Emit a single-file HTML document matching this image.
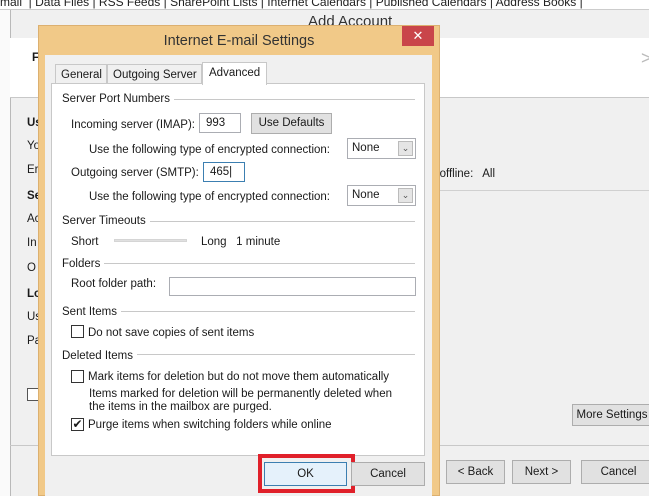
<!DOCTYPE html>
<html><head><style>
*{margin:0;padding:0;box-sizing:border-box}
body{width:649px;height:496px;overflow:hidden;background:#f0f0f0;font-family:"Liberation Sans",sans-serif;font-size:11.5px;color:#1a1a1a;position:relative}
.a{position:absolute;white-space:nowrap}
.btn{position:absolute;border:1px solid #adadad;background:#e1e1e1;text-align:center}
.box{position:absolute;border:1px solid #abadb3;background:#fff}
.cb{position:absolute;width:13px;height:13px;border:1px solid #333;background:#fff}
.grp{position:absolute;height:1px;background:#c8c8c8;left:62px;width:353px}
.lbl{background:#fff;padding-right:4px;z-index:2}
</style></head><body>
<div class="a" style="left:0;top:0;width:649px;height:10px;background:#fff;border-bottom:1px solid #ccc"></div>
<div class="a" style="left:0;top:-5px;font-size:12px;color:#222">mail&nbsp;&nbsp;| Data Files | RSS Feeds | SharePoint Lists | Internet Calendars | Published Calendars | Address Books |</div>
<div class="a" style="left:0;top:10px;width:10px;height:486px;background:#fafafa"></div>
<div class="a" style="left:10px;top:10px;width:639px;height:486px;background:#f0f0f0;border-left:1px solid #b9b9b9"></div>
<div class="a" style="left:308px;top:13px;font-size:15px;color:#333">Add Account</div>
<div class="a" style="left:10px;top:38px;width:639px;height:60px;background:#fff;border-bottom:1px solid #c8c8c8"></div>
<div class="a" style="left:32px;top:52px;font-weight:bold">F</div>
<div class="a" style="left:641px;top:48px;color:#bbb;font-size:18px">&gt;</div>
<div class="a" style="left:27px;top:117px;font-weight:bold">Us</div>
<div class="a" style="left:27px;top:140px">Yo</div>
<div class="a" style="left:27px;top:164px">Er</div>
<div class="a" style="left:27px;top:190px;font-weight:bold">Se</div>
<div class="a" style="left:27px;top:213px">Ac</div>
<div class="a" style="left:27px;top:237px">In</div>
<div class="a" style="left:27px;top:262px">O</div>
<div class="a" style="left:27px;top:288px;font-weight:bold">Lo</div>
<div class="a" style="left:27px;top:311px">Us</div>
<div class="a" style="left:27px;top:335px">Pa</div>
<div class="cb" style="left:27px;top:388px;border-color:#555"></div>
<div class="a" style="left:430px;top:168px">o offline:&nbsp;&nbsp; All</div>
<div class="a" style="left:438px;top:190px;width:211px;height:1px;background:#d0d0d0"></div>
<div class="btn" style="left:572px;top:404px;width:80px;height:22px;line-height:20px">More Settings</div>
<div class="a" style="left:10px;top:445px;width:639px;height:1px;background:#c8c8c8"></div>
<div class="btn" style="left:446px;top:460px;width:59px;height:24px;line-height:22px">&lt; Back</div>
<div class="btn" style="left:512px;top:460px;width:59px;height:24px;line-height:22px">Next &gt;</div>
<div class="btn" style="left:581px;top:460px;width:75px;height:24px;line-height:22px">Cancel</div>
<div class="a" style="left:38px;top:25px;width:402px;height:471px;background:#f1c988;border:1px solid #dcb070"></div>
<div class="a" style="left:0;top:33px;width:478px;text-align:center;font-size:14.5px;color:#333">Internet E-mail Settings</div>
<div class="a" style="left:402px;top:26px;width:32px;height:20px;background:#c9454a;color:#fff;text-align:center;line-height:19px;font-size:13px">✕</div>
<div class="a" style="left:45px;top:55px;width:387px;height:441px;background:#f0f0f0"></div>
<div class="a" style="left:55px;top:64px;width:52px;height:20px;border:1px solid #c8c8c8;border-bottom:none;background:#f0f0f0;padding:4px 0 0 5px">General</div>
<div class="a" style="left:107px;top:64px;width:95px;height:20px;border:1px solid #c8c8c8;border-bottom:none;background:#f0f0f0;padding:4px 0 0 5px">Outgoing Server</div>
<div class="a" style="left:51px;top:83px;width:374px;height:373px;background:#fff;border:1px solid #c8c8c8"></div>
<div class="a" style="left:202px;top:62px;width:65px;height:23px;border:1px solid #c8c8c8;border-bottom:none;background:#fff;padding:4px 0 0 6px">Advanced</div>
<div class="grp" style="top:99px"></div>
<div class="a lbl" style="left:62px;top:93px">Server Port Numbers</div>
<div class="a" style="left:71px;top:119px">Incoming server (IMAP):</div>
<div class="box" style="left:199px;top:113px;width:42px;height:20px;padding:3px 0 0 6px">993</div>
<div class="btn" style="left:251px;top:113px;width:81px;height:21px;line-height:19px">Use Defaults</div>
<div class="a" style="left:89px;top:144px">Use the following type of encrypted connection:</div>
<div class="box" style="left:347px;top:138px;width:69px;height:21px;padding:3px 0 0 4px">None<span class="a" style="left:50px;top:2px;width:15px;height:15px;background:#e5e5e5;border:1px solid #bbb;font-size:9px;text-align:center;line-height:13px;color:#555">⌄</span></div>
<div class="a" style="left:71px;top:167px">Outgoing server (SMTP):</div>
<div class="box" style="left:203px;top:162px;width:42px;height:20px;padding:3px 0 0 6px;border-color:#3c7fb1">465|</div>
<div class="a" style="left:89px;top:191px">Use the following type of encrypted connection:</div>
<div class="box" style="left:347px;top:185px;width:69px;height:21px;padding:3px 0 0 4px">None<span class="a" style="left:50px;top:2px;width:15px;height:15px;background:#e5e5e5;border:1px solid #bbb;font-size:9px;text-align:center;line-height:13px;color:#555">⌄</span></div>
<div class="grp" style="top:221px"></div>
<div class="a lbl" style="left:62px;top:215px">Server Timeouts</div>
<div class="a" style="left:71px;top:236px">Short</div>
<div class="a" style="left:114px;top:239px;width:73px;height:3px;background:#e0e0e0;border:1px solid #d5d5d5"></div>
<div class="a" style="left:201px;top:236px">Long&nbsp;&nbsp; 1 minute</div>
<div class="grp" style="top:263px"></div>
<div class="a lbl" style="left:62px;top:258px">Folders</div>
<div class="a" style="left:71px;top:278px">Root folder path:</div>
<div class="box" style="left:169px;top:277px;width:247px;height:19px"></div>
<div class="grp" style="top:311px"></div>
<div class="a lbl" style="left:62px;top:306px">Sent Items</div>
<div class="cb" style="left:71px;top:325px"></div>
<div class="a" style="left:88px;top:327px">Do not save copies of sent items</div>
<div class="grp" style="top:354px"></div>
<div class="a lbl" style="left:62px;top:350px">Deleted Items</div>
<div class="cb" style="left:71px;top:370px"></div>
<div class="a" style="left:88px;top:371px">Mark items for deletion but do not move them automatically</div>
<div class="a" style="left:89px;top:388px;line-height:13px">Items marked for deletion will be permanently deleted when<br>the items in the mailbox are purged.</div>
<div class="cb" style="left:71px;top:418px;font-size:12px;line-height:11px;text-align:center">✔</div>
<div class="a" style="left:88px;top:419px">Purge items when switching folders while online</div>
<div class="a" style="left:258px;top:454px;width:97px;height:39px;border:4px solid #e0202a"></div>
<div class="btn" style="left:264px;top:462px;width:83px;height:24px;line-height:22px;background:#e5f1fb;border-color:#3c7fb1">OK</div>
<div class="btn" style="left:351px;top:462px;width:74px;height:24px;line-height:22px">Cancel</div>
</body></html>
